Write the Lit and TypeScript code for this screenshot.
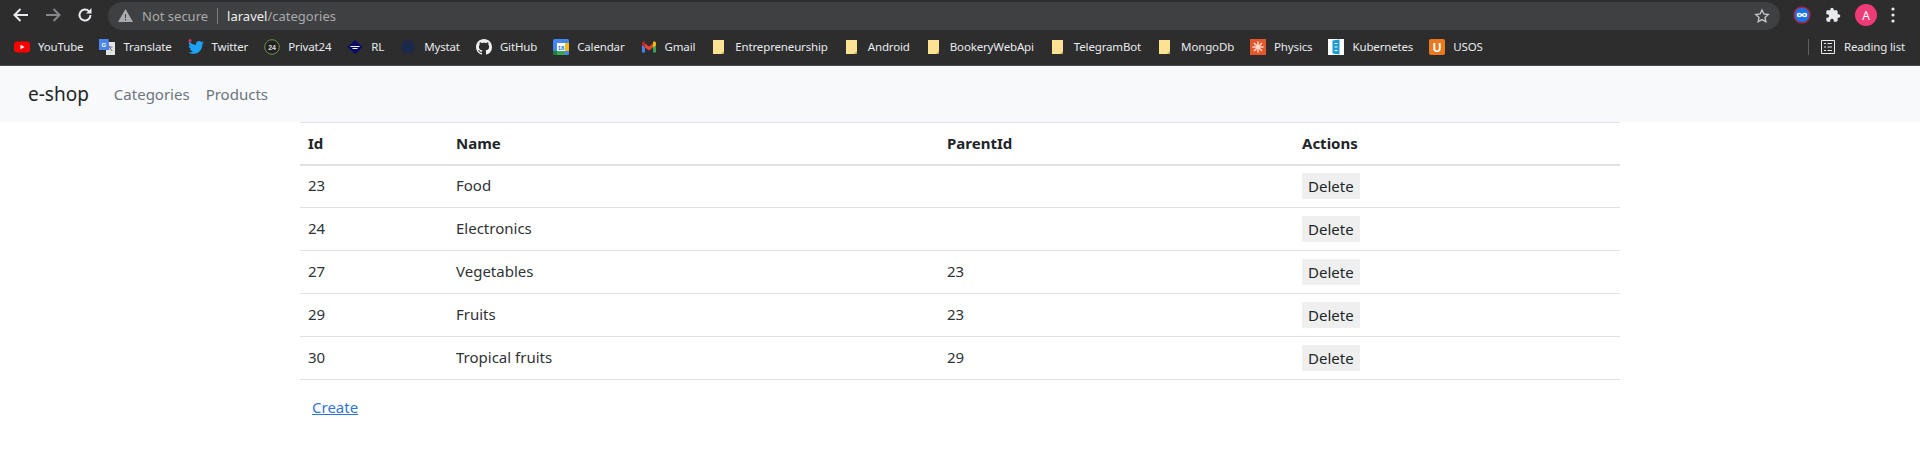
import { LitElement, html, css, svg, TemplateResult } from "lit";
import { customElement } from "lit/decorators.js";

const folder = svg`<svg width="16" height="16" viewBox="0 0 16 16"><path d="M2 1h11v14H2z" fill="#fde293"/><path d="M10 15l3-3v3z" fill="#c9a94f"/></svg>`;

const bookmarks: [string, TemplateResult][] = [
  ["YouTube", svg`<svg width="16" height="16" viewBox="0 0 16 16"><rect y="2.500" width="16" height="11" rx="3" fill="#f00"/><path d="M6.500 5.700v4.600L10.500 8z" fill="#fff"/></svg>`],
  ["Translate", svg`<svg width="16" height="16" viewBox="0 0 16 16"><path d="M7 3h9v13H7z" fill="#e3e3e3"/><path d="M0 0h9.500l1 11H0z" fill="#4a85ee"/><path d="M10 7l3 5M9.500 8h4" stroke="#777" fill="none"/><text x="2.500" y="8" font-size="6" font-weight="700" fill="#fff" font-family="Liberation Sans">G</text></svg>`],
  ["Twitter", svg`<svg width="16" height="16" viewBox="0 0 16 16"><path d="M16 3.500c-.6.300-1.200.4-1.900.5.700-.4 1.200-1 1.400-1.800-.6.400-1.300.6-2 .8C11.700 1.100 8 2.200 8 5.300v.7C5.300 5.900 2.900 4.600 1.300 2.600c-.9 1.500-.4 3.400 1 4.300-.5 0-1-.1-1.500-.4 0 1.600 1.100 3 2.600 3.300-.5.100-1 .2-1.500.1.400 1.300 1.600 2.200 3 2.300C3.700 13.200 1.900 13.700 0 13.500 6.900 17.200 14.700 12.900 14.400 5c.6-.4 1.200-.9 1.600-1.500z" fill="#1da1f2"/><circle cx="2" cy="1.500" r="1.500" fill="#d6336c"/></svg>`],
  ["Privat24", svg`<svg width="16" height="16" viewBox="0 0 16 16"><circle cx="8" cy="8" r="7.300" fill="#222" stroke="#6f8f4a"/><text x="8" y="10.500" text-anchor="middle" font-size="7" font-weight="700" fill="#ddd" font-family="Liberation Sans">24</text></svg>`],
  ["RL", svg`<svg width="16" height="16" viewBox="0 0 16 16"><path d="M8 1l7.500 7L8 15 .500 8z" fill="#0a0a6e"/><path d="M3.500 7.500h9M5.500 9.500h5" stroke="#fff"/></svg>`],
  ["Mystat", svg`<svg width="16" height="16" viewBox="0 0 16 16"><circle cx="8" cy="8" r="7" fill="#1c2a4a"/></svg>`],
  ["GitHub", svg`<svg width="16" height="16" viewBox="0 0 16 16"><path fill="#f0f0f0" d="M8 0C3.580 0 0 3.580 0 8c0 3.540 2.290 6.530 5.470 7.590.4.070.55-.17.55-.38 0-.19-.01-.82-.01-1.490-2.010.37-2.530-.49-2.690-.94-.09-.23-.48-.94-.82-1.130-.28-.15-.68-.52-.01-.53.63-.01 1.080.58 1.230.82.720 1.210 1.870.87 2.330.66.070-.52.280-.87.510-1.070-1.780-.2-3.640-.89-3.640-3.950 0-.87.310-1.590.820-2.150-.08-.2-.36-1.020.08-2.120 0 0 .67-.21 2.200.82.640-.18 1.320-.27 2-.27s1.360.09 2 .27c1.530-1.040 2.200-.82 2.200-.82.440 1.100.16 1.920.08 2.120.51.560.82 1.270.82 2.150 0 3.070-1.870 3.750-3.650 3.950.29.250.54.730.54 1.480 0 1.070-.01 1.930-.01 2.200 0 .21.150.46.550.38A8.010 8.010 0 0016 8c0-4.420-3.580-8-8-8z"/></svg>`],
  ["Calendar", svg`<svg width="16" height="16" viewBox="0 0 16 16"><rect width="16" height="16" rx="1.500" fill="#4285f4"/><path d="M12 4h4v8h-4z" fill="#fbbc04"/><path d="M4 12h8v4H4z" fill="#34a853"/><path d="M0 12h4v4H1.500A1.500 1.500 0 010 14.500z" fill="#188038"/><rect x="4" y="4" width="8" height="8" fill="#fff"/><text x="8" y="10.500" text-anchor="middle" font-size="6" font-weight="700" fill="#1a73e8" font-family="Liberation Sans">18</text></svg>`],
  ["Gmail", svg`<svg width="16" height="16" viewBox="0 0 16 16"><path d="M1 4v9.500h3V7z" fill="#4285f4"/><path d="M12 7v6.500h3V4z" fill="#34a853"/><path d="M4 4.500v4L8 11.500l4-3v-4L8 7.500z" fill="#ea4335"/><path d="M1 4.500C1 2.500 3 2 4 3v5.500L1 6z" fill="#c5221f"/><path d="M15 4.500C15 2.500 13 2 12 3v5.500L15 6z" fill="#fbbc04"/></svg>`],
  ["Entrepreneurship", folder],
  ["Android", folder],
  ["BookeryWebApi", folder],
  ["TelegramBot", folder],
  ["MongoDb", folder],
  ["Physics", svg`<svg width="16" height="16" viewBox="0 0 16 16"><rect width="16" height="16" fill="#e4572e"/><circle cx="8" cy="8" r="2" fill="#fff"/><path d="M8 2.500v11M2.500 8h11M4 4l8 8M12 4l-8 8" stroke="#ffd9c7" stroke-width="1.500"/></svg>`],
  ["Kubernetes", svg`<svg width="16" height="16" viewBox="0 0 16 16"><rect width="16" height="16" fill="#fff"/><path d="M4.500 1.500l7-1v15l-7-1z" fill="#1a9ad6"/><path d="M6.500 4.500h3M6.500 8h3M6.500 11.500h3" stroke="#fff" stroke-width="1.200"/></svg>`],
  ["USOS", svg`<svg width="16" height="16" viewBox="0 0 16 16"><rect width="16" height="16" rx="2" fill="#e8791e"/><text x="8" y="12.500" text-anchor="middle" font-size="12" font-weight="700" fill="#fff" font-family="Liberation Sans">U</text></svg>`],
];

const rows = [
  { id: 23, name: "Food", parent: "" },
  { id: 24, name: "Electronics", parent: "" },
  { id: 27, name: "Vegetables", parent: "23" },
  { id: 29, name: "Fruits", parent: "23" },
  { id: 30, name: "Tropical fruits", parent: "29" },
];

@customElement("app-root")
export class AppRoot extends LitElement {
  static styles = css`
    :host {
      display: block;
      font-family: "Noto Sans", "Open Sans", sans-serif;
      color: #212529;
      background: #fff;
      height: 473px;
      overflow: hidden;
    }
    .toolbar {
      height: 30px;
      background: #2d2d2d;
      display: flex;
      align-items: center;
      padding: 0 0 0 12px;
      box-sizing: border-box;
    }
    .nav-icons {
      display: flex;
      gap: 14px;
      width: 96px;
      flex: none;
    }
    .omnibox {
      flex: 1;
      height: 28px;
      border-radius: 14px;
      background: #3f4042;
      display: flex;
      align-items: center;
      padding: 0 10px;
      font-size: 13px;
      color: #a9abad;
      margin-top: 1px;
    }
    .warn {
      margin-right: 9px;
    }
    .sep {
      width: 1px;
      height: 16px;
      background: #7c7d80;
      margin: 0 9px;
    }
    .host-name {
      color: #eee;
    }
    .star {
      margin-left: auto;
    }
    .ext {
      display: flex;
      align-items: center;
      width: 140px;
      flex: none;
      padding-left: 13px;
      gap: 14px;
      box-sizing: border-box;
    }
    .avatar {
      width: 22px;
      height: 22px;
      border-radius: 50%;
      background: #ee3a75;
      color: #fff;
      font-size: 12px;
      display: flex;
      align-items: center;
      justify-content: center;
    }
    .bookmarks {
      height: 36px;
      background: #2d2d2d;
      border-bottom: 1px solid #4a4a4a;
      box-sizing: border-box;
      display: flex;
      align-items: center;
      padding: 0 0 2px 14px;
      font-size: 11.5px;
      letter-spacing: -0.15px;
      color: #e8eaed;
    }
    .bm {
      display: flex;
      align-items: center;
      gap: 8px;
      margin-right: 16px;
      white-space: nowrap;
    }
    .reading {
      margin-left: auto;
      margin-right: 15px;
      display: flex;
      align-items: center;
      gap: 9px;
    }
    .reading-sep {
      width: 1px;
      height: 16px;
      background: #5f6062;
      margin-right: 3px;
    }
    .navbar {
      height: 56px;
      background: #f8f9fa;
      display: flex;
      align-items: center;
      padding-left: 28px;
      box-sizing: border-box;
    }
    .brand {
      font-size: 19px;
      color: #212529;
      margin-right: 17px;
    }
    .navbar a {
      font-size: 15px;
      color: #6c757d;
      text-decoration: none;
      padding: 0 8px;
    }
    main {
      width: 1320px;
      margin: 0 auto;
    }
    table {
      width: 100%;
      border-collapse: collapse;
      table-layout: fixed;
      font-size: 15px;
    }
    th,
    td {
      text-align: left;
      padding: 0 8px 2px;
      height: 43px;
      border-bottom: 1px solid #dee2e6;
      box-sizing: border-box;
      color: #2f3337;
    }
    td.actions {
      padding-bottom: 0;
    }
    th {
      font-weight: 700;
      height: 42px;
      padding: 0 8px;
      color: #212529;
      border-top: 1px solid #dee2e6;
      border-bottom: 2px solid #dee2e6;
    }
    .del {
      display: inline-block;
      background: #efefef;
      border: 0;
      padding: 1px 6px;
      font: inherit;
      color: #212529;
      line-height: 24px;
    }
    .create {
      display: inline-block;
      margin: 17px 0 0 12px;
      color: #2f74d8;
      font-size: 15px;
    }
  `;

  render() {
    return html`
      <div class="toolbar">
        <div class="nav-icons">
          <svg width="18" height="18" viewBox="0 0 18 18"><path d="M16 9H3M8.500 3L2.500 9l6 6" fill="none" stroke="#e8eaed" stroke-width="2"/></svg>
          <svg width="18" height="18" viewBox="0 0 18 18"><path d="M2 9h13M9.500 3l6 6-6 6" fill="none" stroke="#85878a" stroke-width="2"/></svg>
          <svg width="18" height="18" viewBox="0 0 18 18"><path d="M14.500 9a5.500 5.500 0 11-1.600-3.900" fill="none" stroke="#e8eaed" stroke-width="2"/><path d="M15.500 2v5.500H10z" fill="#e8eaed"/></svg>
        </div>
        <div class="omnibox">
          <svg class="warn" width="15" height="15" viewBox="0 0 15 15"><path d="M7.500 1L15 14H0z" fill="#a9abad"/><path d="M7 6h1v4H7zM7 11h1v1.500H7z" fill="#3f4042"/></svg>
          <span>Not secure</span>
          <span class="sep"></span>
          <span><span class="host-name">laravel</span>/categories</span>
          <svg class="star" width="16" height="16" viewBox="0 0 24 24"><path d="M12 3l2.800 6 6.500.8-4.800 4.400 1.300 6.500L12 17.400l-5.800 3.300 1.300-6.500L2.700 9.800 9.200 9z" fill="none" stroke="#c6c8ca" stroke-width="2"/></svg>
        </div>
        <div class="ext">
          <svg width="18" height="18" viewBox="0 0 18 18"><circle cx="9" cy="9" r="8" fill="#1a73e8" stroke="#a4243b" stroke-width="1.500"/><path d="M9 9c-1.500-2-4.500-2-4.500 0s3 2 4.500 0c1.500-2 4.500-2 4.500 0s-3 2-4.500 0z" fill="none" stroke="#fff" stroke-width="1.500"/></svg>
          <svg width="16" height="16" viewBox="0 0 24 24"><path fill="#e8eaed" d="M20.500 11H19V7c0-1.100-.9-2-2-2h-4V3.500a2.500 2.500 0 00-5 0V5H4c-1.100 0-2 .9-2 2v3.800h1.500a2.700 2.700 0 010 5.400H2V20c0 1.100.9 2 2 2h3.800v-1.500a2.700 2.700 0 015.400 0V22H17c1.100 0 2-.9 2-2v-4h1.500a2.500 2.500 0 000-5z"/></svg>
          <span class="avatar">A</span>
          <svg width="4" height="16" viewBox="0 0 4 16"><circle cx="2" cy="2" r="1.600" fill="#e8eaed"/><circle cx="2" cy="8" r="1.600" fill="#e8eaed"/><circle cx="2" cy="14" r="1.600" fill="#e8eaed"/></svg>
        </div>
      </div>
      <div class="bookmarks">
        ${bookmarks.map(([label, icon]) => html`<div class="bm">${icon}<span>${label}</span></div>`)}
        <div class="reading">
          <span class="reading-sep"></span>
          <svg width="14" height="14" viewBox="0 0 14 14"><path d="M.5.5h13v13H.5z" fill="none" stroke="#e8eaed"/><path d="M3 3.500h2M6.500 3.500H11M3 7h2M6.500 7H11M3 10.500h2M6.500 10.500H11" stroke="#e8eaed"/></svg>
          <span>Reading list</span>
        </div>
      </div>
      <nav class="navbar">
        <span class="brand">e-shop</span>
        <a>Categories</a>
        <a>Products</a>
      </nav>
      <main>
        <table>
          <colgroup>
            <col style="width:148px" />
            <col style="width:491px" />
            <col style="width:355px" />
            <col />
          </colgroup>
          <thead>
            <tr><th>Id</th><th>Name</th><th>ParentId</th><th>Actions</th></tr>
          </thead>
          <tbody>
            ${rows.map(
              (r) => html`<tr>
                <td>${r.id}</td>
                <td>${r.name}</td>
                <td>${r.parent}</td>
                <td class="actions"><button class="del">Delete</button></td>
              </tr>`
            )}
          </tbody>
        </table>
        <a class="create" href="#">Create</a>
      </main>
    `;
  }
}
